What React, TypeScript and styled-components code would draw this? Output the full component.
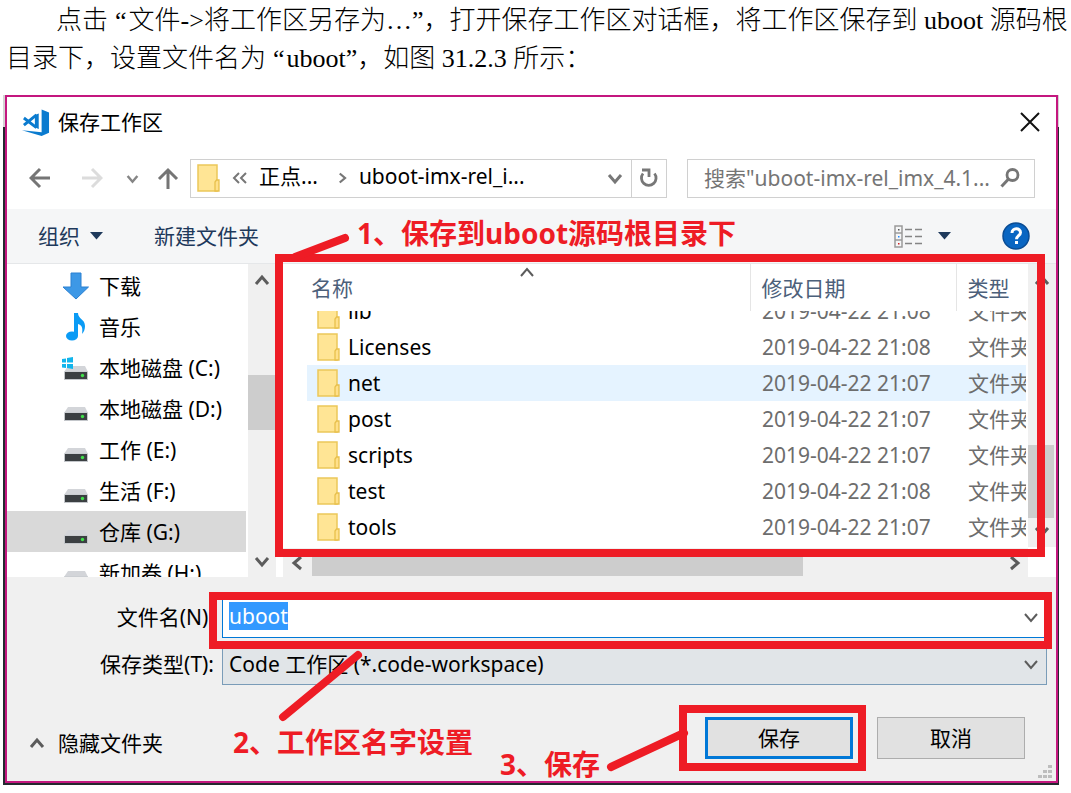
import React, { useEffect, useRef } from "react";
import styled, { createGlobalStyle, css } from "styled-components";

const uiFont = `"Noto Sans", "Noto Sans CJK SC", sans-serif`;
const red = "#ee1c25";

const GlobalStyle = createGlobalStyle`
  *, *::before, *::after { box-sizing: border-box; }
  body { margin: 0; background: #fff; color: #000; }
  button, input, select { font: inherit; color: inherit; }
  button { padding: 0; border: 0; background: none; }
  svg { display: block; flex: none; }
`;

const Page = styled.main`
  padding: 2px 0 8px;
`;

const Paragraph = styled.p`
  margin: 0 0 17px;
  padding-left: 6px;
  font: 26px/38px "Liberation Serif", "Noto Sans CJK SC", serif;
  font-weight: 300;
  text-indent: 50px;
`;

const OpenQuote = styled.span`
  padding-left: 7px;
  padding-right: 2px;
  text-indent: 0;
`;

const Figure = styled.figure`
  margin: 0 12px 0 3px;
  padding: 0 1px 2px 2px;
  background: linear-gradient(#d4d4d4 32px, #24292f 32px);
`;

const Dialog = styled.section`
  border: 2px solid #c4177f;
  background: #fff;
  font: 21px/28px ${uiFont};
`;

const TitleBar = styled.header`
  display: flex;
  align-items: center;
  gap: 8px;
  height: 50px;
  padding: 0 16px 0 14px;
`;

const Title = styled.h1`
  flex: 1;
  margin: 0;
  font-size: 21px;
  font-weight: 400;
`;

const NavBar = styled.nav`
  display: flex;
  align-items: center;
  height: 62px;
  padding: 0 21px 0 22px;
`;

const NavButtons = styled.div`
  display: grid;
  flex: none;
  grid-template-columns: 52px 45px 31px 33px;
  align-items: center;
  justify-items: start;
`;

const AddressBar = styled.div`
  display: flex;
  flex: 477 477 477px;
  min-width: 0;
  height: 39px;
  margin-right: 20px;
  border: 1px solid #d0d0d0;
  white-space: nowrap;
  overflow: hidden;
`;

const Crumbs = styled.div`
  display: flex;
  flex: 1;
  align-items: center;
  padding-left: 6px;
  padding-right: 8px;
`;

const Crumb = styled.button<{ $grow?: boolean }>`
  flex: ${(p) => (p.$grow ? 1 : "none")};
  text-align: left;
  margin: 0 18px 4px 11px;
`;

const CrumbOverflow = styled.svg`
  margin-left: 12px;
`;

const RefreshButton = styled.button`
  display: grid;
  place-items: center;
  width: 35px;
  border-left: 1px solid #d0d0d0;
`;

const SearchBox = styled.label`
  display: flex;
  flex: 348 348 348px;
  min-width: 0;
  align-items: center;
  height: 39px;
  padding: 0 14px 0 16px;
  border: 1px solid #d0d0d0;
`;

const SearchInput = styled.input`
  flex: 1;
  min-width: 0;
  padding: 0;
  border: 0;
  outline: 0;
  background: none;
  &::placeholder { color: #757575; opacity: 1; }
`;

const Toolbar = styled.div`
  position: relative;
  display: flex;
  align-items: center;
  height: 55px;
  padding: 0 26px 0 31px;
  border-bottom: 1px solid #e5e7e9;
  background: #f5f6f7;
  color: #1e395b;
`;

const ToolButton = styled.button`
  display: flex;
  align-items: center;
  gap: 10px;
`;

const OrganizeButton = styled(ToolButton)`
  margin-right: 51px;
`;

const ViewButton = styled(ToolButton)`
  gap: 15px;
  margin: 0 51px 0 auto;
`;

const Body = styled.div`
  display: flex;
  height: 313px;
`;

const Sidebar = styled.ul`
  width: 241px;
  margin: 0;
  padding: 1px 2px 0 0;
  list-style: none;
  overflow: hidden;
`;

const Place = styled.li<{ $selected?: boolean }>`
  display: flex;
  align-items: center;
  gap: 9px;
  height: 41px;
  padding-left: 55px;
  background: ${(p) => (p.$selected ? "#d9d9d9" : "none")};
`;

const ScrollTrack = styled.div<{ $horizontal?: boolean }>`
  display: flex;
  flex: none;
  justify-content: space-between;
  align-items: center;
  background: #f0f0f0;
  ${(p) =>
    p.$horizontal
      ? css`
          height: 29px;
          padding: 0 6px;
        `
      : css`
          flex-direction: column;
          width: 28px;
          padding: 8px 0;
        `}
`;

const Thumb = styled.div`
  background: #cdcdcd;
`;

const SideThumb = styled(Thumb)`
  width: 28px;
  height: 55px;
  margin-bottom: 36px;
`;

const ListThumb = styled(Thumb)`
  width: 26px;
  height: 73px;
  margin: 151px 2px 0 0;
`;

const BottomThumb = styled(Thumb)`
  width: 67%;
  height: 26px;
  margin-right: auto;
  margin-left: 7px;
`;

const ListPane = styled.div`
  position: relative;
  display: flex;
  flex: 1;
  min-width: 0;
  border-left: 7px solid #fff;
`;

const ListColumn = styled.div`
  display: flex;
  flex: 1;
  flex-direction: column;
  min-width: 0;
`;

const TableArea = styled.div`
  flex: 1;
  padding: 0 2px 0 24px;
  overflow: hidden;
`;

const ListScroll = styled.div`
  display: flex;
  flex-direction: column;
  padding-bottom: 30px;
  & > div { flex: 1; }
`;

const FileTable = styled.table`
  width: 100%;
  table-layout: fixed;
  border-collapse: collapse;
  white-space: nowrap;
`;

const HeadCell = styled.th<{ $width?: number }>`
  position: relative;
  width: ${(p) => (p.$width ? `${p.$width}px` : "auto")};
  height: 47px;
  padding: 0 0 0 ${(p) => (p.$width ? 11 : 4)}px;
  border-left: ${(p) => (p.$width ? "1px solid #e5e5e5" : "0")};
  color: #4c607a;
  font-weight: 400;
  text-align: left;
`;

const SortMark = styled.span`
  position: absolute;
  top: 0;
  left: calc(50% - 9px);
`;

const FileRow = styled.tr<{ $hot?: boolean }>`
  background: ${(p) => (p.$hot ? "#e5f3ff" : "none")};
`;

const Cell = styled.td`
  padding: 0 0 0 12px;
  overflow: hidden;
  color: #6d6d6d;
`;

const NameCell = styled(Cell)`
  padding-left: 10px;
  color: #000;
`;

const CellContent = styled.div<{ $cut?: boolean }>`
  display: flex;
  align-items: ${(p) => (p.$cut ? "flex-end" : "center")};
  gap: 8px;
  height: ${(p) => (p.$cut ? 18 : 36)}px;
  line-height: 36px;
  overflow: hidden;
`;

const Footer = styled.footer`
  padding: 21px 9px 0 7px;
  background: #f0f0f0;
`;

const Field = styled.div`
  position: relative;
  display: flex;
  align-items: center;
  height: 47px;
`;

const FieldLabel = styled.label`
  width: 208px;
  padding-right: 8px;
  padding-bottom: 9px;
  text-align: right;
`;

const FieldBox = styled.div`
  position: relative;
  flex: 1;
  height: 40px;
  margin: 0 0 7px;
`;

const NameInput = styled.input`
  width: 100%;
  height: 40px;
  padding: 0 40px 4px 6px;
  border: 1px solid #0078d7;
  outline: 0;
  background: #fff;
  &::selection { background: #3399ff; color: #fff; }
`;

const TypeSelect = styled.select`
  width: 100%;
  height: 40px;
  padding: 0 40px 2px 6px;
  appearance: none;
  border: 1px solid #7a9cb8;
  border-radius: 0;
  background: #e1e5e8;
`;

const FieldChevron = styled.span`
  position: absolute;
  top: 11px;
  right: 8px;
  pointer-events: none;
`;

const Actions = styled.div`
  position: relative;
  display: flex;
  align-items: center;
  gap: 24px;
  height: 89px;
  padding: 3px 22px 0 0;
`;

const HideFolders = styled.button`
  display: flex;
  align-items: center;
  gap: 13px;
  margin-right: auto;
  padding: 9px 0 0 15px;
`;

const ActionButton = styled.button<{ $primary?: boolean }>`
  display: block;
  width: 148px;
  height: 42px;
  border: ${(p) => (p.$primary ? "3px solid #0078d7" : "1px solid #adadad")};
  background: #e1e1e1;
`;

const SaveSlot = styled.div`
  position: relative;
`;

const Grip = styled.span`
  position: absolute;
  right: -5px;
  bottom: 2px;
`;

/* Tutorial annotations drawn over the dialog */
const Outline = styled.div<{ $inset: string }>`
  position: absolute;
  inset: ${(p) => p.$inset};
  z-index: 2;
  border: 8px solid ${red};
  pointer-events: none;
`;

const Note = styled.span<{ $left: number; $top: number }>`
  position: absolute;
  left: ${(p) => p.$left}px;
  top: ${(p) => p.$top}px;
  z-index: 3;
  color: ${red};
  font-size: 28px;
  font-weight: 700;
  line-height: 36px;
  white-space: nowrap;
`;

const Stroke = styled.svg<{ $left: number; $top: number }>`
  position: absolute;
  left: ${(p) => p.$left}px;
  top: ${(p) => p.$top}px;
  z-index: 3;
  fill: none;
  stroke: ${red};
  stroke-width: 8;
  stroke-linecap: round;
  pointer-events: none;
`;

type Dir = "up" | "down" | "left" | "right";
const chevrons: Record<Dir, string> = {
  up: "M2 12 L8 5 L14 12",
  down: "M2 5 L8 12 L14 5",
  left: "M12 2 L5 8 L12 14",
  right: "M5 2 L12 8 L5 14",
};

const Chevron = ({ dir, size = 16, color = "#5c5c5c", weight = 3 }: { dir: Dir; size?: number; color?: string; weight?: number }) => (
  <svg width={size} height={size} viewBox="0 0 16 16" fill="none" stroke={color} strokeWidth={weight}>
    <path d={chevrons[dir]} />
  </svg>
);

const Arrow = ({ dir, color = "#757575" }: { dir: "left" | "right" | "up"; color?: string }) => (
  <svg width="22" height="22" viewBox="0 0 22 22" fill="none" stroke={color} strokeWidth="3">
    {dir === "left" && <path d="M21 11H2M11 2L2 11l9 9" />}
    {dir === "right" && <path d="M1 11h19M11 2l9 9-9 9" />}
    {dir === "up" && <path d="M11 22V3M2 12l9-9 9 9" />}
  </svg>
);

const Triangle = () => (
  <svg width="13" height="8" viewBox="0 0 13 8">
    <path d="M0 0h13L6.500 7.500z" fill="#1e395b" />
  </svg>
);

const FolderIcon = () => (
  <svg width="23" height="28" viewBox="0 0 23 28">
    <path d="M1 1h19v26H1z" fill="#ffe595" stroke="#ecc75a" strokeWidth="1.500" />
    <path d="M18 27v-9l1.500-2H22v11z" fill="#ffe08a" stroke="#e8c04c" strokeWidth="1.300" />
  </svg>
);

const CodeLogo = () => (
  <svg width="29" height="29" viewBox="0 0 90 90">
    <path d="M64 5l23 9v63l-23 10L3 69l61 6z" fill="#0a7bcf" />
    <path d="M9 31l39 30M9 53l39-32" stroke="#0a7bcf" strokeWidth="9" fill="none" />
    <path d="M43 22l12-5v48l-12-5z" fill="#0a7bcf" />
  </svg>
);

const DownloadIcon = () => (
  <svg width="28" height="28" viewBox="0 0 28 28">
    <path d="M9 1h10v14h7.500L14 27 1 15h8z" fill="#3d98e6" stroke="#2a80d2" />
  </svg>
);

const MusicIcon = () => (
  <svg width="28" height="28" viewBox="0 0 28 28" fill="#0a9bf5">
    <ellipse cx="10" cy="23" rx="6" ry="4.500" />
    <path d="M12 0h4c0 6 7 6 7 13 0 3-1 6-3 8 1-6 0-9-4-10v12h-4z" />
  </svg>
);

const DiskIcon = ({ system }: { system?: boolean }) => (
  <svg width="28" height="28" viewBox="0 0 28 28">
    <path d="M6 12h17l3 6H2z" fill="#d3d5d9" />
    <path d="M2 17.500h24V26H2z" fill="#c3c6ca" />
    <path d="M3 18h22v7H3z" fill="#3b3f42" />
    <circle cx="20.500" cy="21.500" r="1.700" fill="#3fe04a" />
    {system && <path d="M0 5l4-.5v4H0zM5 4l6-1v5.500H5zM0 10h4v4l-4-.5zM5 10h6v5l-6-1z" fill="#12b5ec" />}
  </svg>
);

const ViewIcon = () => (
  <svg width="29" height="23" viewBox="0 0 29 23" fill="none">
    <path d="M1 1h7v21H1zM1 8h7M1 15h7" stroke="#9a9a9a" strokeWidth="1.500" />
    <path d="M11 4.500h7M21 4.500h7M11 11.500h7M21 11.500h7M11 18.500h7M21 18.500h7" stroke="#858585" strokeWidth="1.500" />
    <path d="M4 4h1.500v1.500H4z" fill="#555" />
    <path d="M4 11h1.500v1.500H4z" fill="#1e88ff" />
    <path d="M4 18h1.500v1.500H4z" fill="#d02020" />
  </svg>
);

const HelpIcon = () => (
  <svg width="28" height="28" viewBox="0 0 28 28">
    <circle cx="14" cy="14" r="13" fill="#0a66c2" stroke="#0a4c94" strokeWidth="1.500" />
    <path d="M10 11c0-5.500 8.500-5.500 8.500-.5 0 3-4 3.300-4 6.700" fill="none" stroke="#fff" strokeWidth="3" />
    <path d="M13 19h3v3h-3z" fill="#fff" />
  </svg>
);

const CloseIcon = () => (
  <svg width="20" height="20" viewBox="0 0 20 20" stroke="#111" strokeWidth="2">
    <path d="M1 1l18 18M19 1L1 19" />
  </svg>
);

const RefreshIcon = () => (
  <svg width="20" height="20" viewBox="0 0 20 20" fill="none" stroke="#777" strokeWidth="2.800">
    <path d="M4 5.500A7.300 7.300 0 1 0 15.500 5.500" />
    <path d="M3 2h7v7" />
  </svg>
);

const MagnifierIcon = () => (
  <svg width="20" height="20" viewBox="0 0 20 20" fill="none" stroke="#757575">
    <circle cx="12.500" cy="7" r="5.500" strokeWidth="2.800" />
    <path d="M8.500 11L1.500 18.500" strokeWidth="3" />
  </svg>
);

const GripIcon = () => (
  <svg width="14" height="14" viewBox="0 0 14 14" fill="#bdbdbd">
    <path d="M10 0h4v3h-4zM5 5h4v3H5zM10 5h4v3h-4zM0 10h4v3H0zM5 10h4v3H5zM10 10h4v3h-4z" />
  </svg>
);

const places: { name: string; icon: React.ReactNode; selected?: boolean }[] = [
  { name: "下载", icon: <DownloadIcon /> },
  { name: "音乐", icon: <MusicIcon /> },
  { name: "本地磁盘 (C:)", icon: <DiskIcon system /> },
  { name: "本地磁盘 (D:)", icon: <DiskIcon /> },
  { name: "工作 (E:)", icon: <DiskIcon /> },
  { name: "生活 (F:)", icon: <DiskIcon /> },
  { name: "仓库 (G:)", icon: <DiskIcon />, selected: true },
  { name: "新加卷 (H:)", icon: <DiskIcon /> },
];

const files = [
  { name: "lib", date: "2019-04-22 21:08", cut: true },
  { name: "Licenses", date: "2019-04-22 21:08" },
  { name: "net", date: "2019-04-22 21:07", hot: true },
  { name: "post", date: "2019-04-22 21:07" },
  { name: "scripts", date: "2019-04-22 21:07" },
  { name: "test", date: "2019-04-22 21:08" },
  { name: "tools", date: "2019-04-22 21:07" },
];

export default function App() {
  const nameRef = useRef<HTMLInputElement>(null);

  useEffect(() => {
    nameRef.current?.focus();
    nameRef.current?.select();
  }, []);

  return (
    <Page>
      <GlobalStyle />
      <Paragraph>
        点击<OpenQuote>“</OpenQuote>文件-&gt;将工作区另存为…”，打开保存工作区对话框，将工作区保存到 uboot 源码根
        <br />
        目录下，设置文件名为<OpenQuote>“</OpenQuote>uboot”，如图 31.2.3 所示：
      </Paragraph>

      <Figure>
        <Dialog aria-label="保存工作区">
          <TitleBar>
            <CodeLogo />
            <Title>保存工作区</Title>
            <button aria-label="关闭"><CloseIcon /></button>
          </TitleBar>

          <NavBar>
            <NavButtons>
              <button aria-label="后退"><Arrow dir="left" /></button>
              <button aria-label="前进"><Arrow dir="right" color="#dcdcdc" /></button>
              <button aria-label="最近位置"><Chevron dir="down" size={13} color="#858585" /></button>
              <button aria-label="向上"><Arrow dir="up" /></button>
            </NavButtons>
            <AddressBar>
              <Crumbs>
                <FolderIcon />
                <CrumbOverflow width="16" height="12" viewBox="0 0 16 12" fill="none" stroke="#777" strokeWidth="2">
                  <path d="M7 1L2 6l5 5M14 1L9 6l5 5" />
                </CrumbOverflow>
                <Crumb>正点...</Crumb>
                <Chevron dir="right" size={12} color="#777" />
                <Crumb $grow>uboot-imx-rel_i...</Crumb>
                <Chevron dir="down" color="#777" />
              </Crumbs>
              <RefreshButton aria-label="刷新"><RefreshIcon /></RefreshButton>
            </AddressBar>
            <SearchBox>
              <SearchInput aria-label="搜索" placeholder={'搜索"uboot-imx-rel_imx_4.1...'} />
              <MagnifierIcon />
            </SearchBox>
          </NavBar>

          <Toolbar>
            <OrganizeButton>组织<Triangle /></OrganizeButton>
            <ToolButton>新建文件夹</ToolButton>
            <ViewButton aria-label="更改视图"><ViewIcon /><Triangle /></ViewButton>
            <button aria-label="帮助"><HelpIcon /></button>
            <Note $left={350} $top={6}>1、保存到uboot源码根目录下</Note>
            <Stroke $left={283} $top={23} width="62" height="30" viewBox="0 0 62 30">
              <path d="M5 25L55 6" />
            </Stroke>
          </Toolbar>

          <Body>
            <Sidebar>
              {places.map((p) => (
                <Place key={p.name} $selected={p.selected}>
                  {p.icon}
                  {p.name}
                </Place>
              ))}
            </Sidebar>
            <ScrollTrack>
              <Chevron dir="up" />
              <SideThumb />
              <Chevron dir="down" />
            </ScrollTrack>
            <ListPane>
              <ListColumn>
                <TableArea>
                  <FileTable>
                    <thead>
                      <tr>
                        <HeadCell>
                          名称
                          <SortMark><Chevron dir="up" weight={2} /></SortMark>
                        </HeadCell>
                        <HeadCell $width={206}>修改日期</HeadCell>
                        <HeadCell $width={70}>类型</HeadCell>
                      </tr>
                    </thead>
                    <tbody>
                      {files.map((f) => (
                        <FileRow key={f.name} $hot={f.hot}>
                          <NameCell>
                            <CellContent $cut={f.cut}><FolderIcon />{f.name}</CellContent>
                          </NameCell>
                          <Cell><CellContent $cut={f.cut}>{f.date}</CellContent></Cell>
                          <Cell><CellContent $cut={f.cut}>文件夹</CellContent></Cell>
                        </FileRow>
                      ))}
                    </tbody>
                  </FileTable>
                </TableArea>
                <ScrollTrack $horizontal>
                  <Chevron dir="left" />
                  <BottomThumb />
                  <Chevron dir="right" />
                </ScrollTrack>
              </ListColumn>
              <ListScroll>
                <ScrollTrack>
                  <Chevron dir="up" />
                  <ListThumb />
                  <Chevron dir="down" />
                </ScrollTrack>
              </ListScroll>
              <Outline $inset="-10px 11px 20px -8px" />
            </ListPane>
          </Body>

          <Footer>
            <Field>
              <FieldLabel htmlFor="file-name">文件名(N):</FieldLabel>
              <FieldBox>
                <NameInput id="file-name" ref={nameRef} defaultValue="uboot" />
                <FieldChevron><Chevron dir="down" weight={2} /></FieldChevron>
              </FieldBox>
              <Outline $inset="-6px -5px -4px 195px" />
            </Field>
            <Field>
              <FieldLabel htmlFor="file-type">保存类型(T):</FieldLabel>
              <FieldBox>
                <TypeSelect id="file-type">
                  <option>Code 工作区 (*.code-workspace)</option>
                </TypeSelect>
                <FieldChevron><Chevron dir="down" weight={2} /></FieldChevron>
              </FieldBox>
              <Stroke $left={264} $top={5} width="88" height="74" viewBox="0 0 88 74">
                <path d="M5 67L80 5" />
              </Stroke>
            </Field>
            <Actions>
              <HideFolders><Chevron dir="up" />隐藏文件夹</HideFolders>
              <SaveSlot>
                <ActionButton $primary>保存</ActionButton>
                <Outline $inset="-12px -13px -12px -26px" />
                <Stroke $left={-102} $top={10} width="90" height="46" viewBox="0 0 90 46">
                  <path d="M8 40L81 6" />
                </Stroke>
                <Note $left={-205} $top={29}>3、保存</Note>
              </SaveSlot>
              <ActionButton>取消</ActionButton>
              <Note $left={219} $top={32}>2、工作区名字设置</Note>
              <Grip><GripIcon /></Grip>
            </Actions>
          </Footer>
        </Dialog>
      </Figure>
    </Page>
  );
}
